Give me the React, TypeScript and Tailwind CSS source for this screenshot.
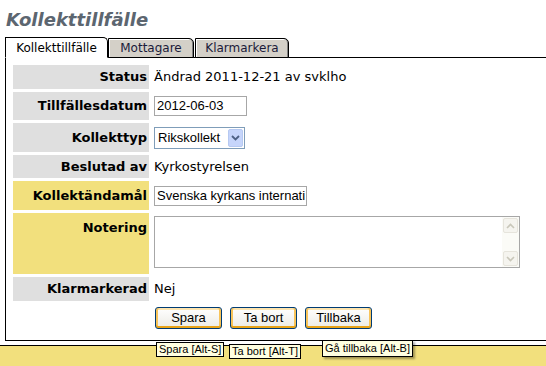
import React from "react";

const verdana = "font-['DejaVu_Sans',Verdana,sans-serif]";
const arial = "font-['Liberation_Sans',Arial,sans-serif]";

type Row = {
  label: string;
  h: string;
  tone: "gray" | "yellow";
  top?: boolean;
  value: React.ReactNode;
};

function TextBox({ value, w }: { value: string; w: string }) {
  return (
    <div
      className={`${w} h-[20px] whitespace-nowrap border border-[#a7a7a7] bg-white pl-[2px] text-[13px] leading-[18px] text-black ${arial}`}
    >
      {value}
    </div>
  );
}

function SelectBox() {
  return (
    <div className={`flex h-[22px] w-[91px] items-center border border-[#7f9db9] bg-white pl-[3px] pr-[1px] text-[13px] text-black ${arial}`}>
      <span className="flex-1">Rikskollekt</span>
      <span className="flex h-[18px] w-[15px] items-center justify-center rounded-[2px] border border-[#b6c9f2] bg-[#c6d5fb]">
        <svg width="9" height="6" viewBox="0 0 9 6">
          <path d="M1 1 L4.5 4.5 L8 1" fill="none" stroke="#4d6185" strokeWidth="1.8" />
        </svg>
      </span>
    </div>
  );
}

function NoteArea() {
  return (
    <div className="flex h-[52px] w-[366px] border border-[#a7a7a7] bg-white">
      <div className="flex-1" />
      <div className="flex w-[17px] flex-col justify-between bg-[#fbfbf7] p-[1px]">
        <div className="flex h-[15px] items-center justify-center rounded-[2px] border border-[#e6e4dc] bg-[#f5f4ef]">
          <svg width="9" height="6" viewBox="0 0 9 6">
            <path d="M1 5 L4.5 1.5 L8 5" fill="none" stroke="#c9c7ba" strokeWidth="1.6" />
          </svg>
        </div>
        <div className="flex h-[15px] items-center justify-center rounded-[2px] border border-[#e6e4dc] bg-[#f5f4ef]">
          <svg width="9" height="6" viewBox="0 0 9 6">
            <path d="M1 1 L4.5 4.5 L8 1" fill="none" stroke="#c9c7ba" strokeWidth="1.6" />
          </svg>
        </div>
      </div>
    </div>
  );
}

function XpButton({ label }: { label: string }) {
  return (
    <button
      className={`h-[22px] w-[67px] rounded-[3px] border border-[#003c74] bg-gradient-to-b from-white to-[#ecebe4] text-[13px] text-black shadow-[inset_0_-2px_0_#e8a317,inset_2px_0_0_#f8c45a,inset_-2px_0_0_#f8c45a,inset_0_2px_0_#fde5b0] ${arial}`}
    >
      {label}
    </button>
  );
}

const rows: Row[] = [
  { label: "Status", h: "h-[24px]", tone: "gray", value: <span>Ändrad 2011-12-21 av svklho</span> },
  { label: "Tillfällesdatum", h: "h-[28px]", tone: "gray", value: <TextBox value="2012-06-03" w="w-[93px]" /> },
  { label: "Kollekttyp", h: "h-[29px]", tone: "gray", value: <SelectBox /> },
  { label: "Beslutad av", h: "h-[23px]", tone: "gray", value: <span>Kyrkostyrelsen</span> },
  { label: "Kollektändamål", h: "h-[29px]", tone: "yellow", value: <TextBox value="Svenska kyrkans internati" w="w-[153px]" /> },
  { label: "Notering", h: "h-[61px]", tone: "yellow", top: true, value: <NoteArea /> },
  { label: "Klarmarkerad", h: "h-[24px]", tone: "gray", value: <span>Nej</span> },
];

function Tooltip({ text, className }: { text: string; className: string }) {
  return (
    <div
      className={`absolute whitespace-nowrap border border-black bg-[#ffffe1] px-[2px] text-[11px] leading-[13px] text-black ${arial} ${className}`}
    >
      {text}
    </div>
  );
}

export default function App() {
  return (
    <div className={`relative h-[366px] w-[546px] overflow-hidden bg-white ${verdana}`}>
      <div className="h-[37px] pl-[6px] pt-[8px]">
        <h1 className="text-[18px] font-bold italic leading-[24px] text-[#5c6670]">Kollekttillfälle</h1>
      </div>

      <div className="ml-[5px] w-[580px]">
        <div className="relative z-10 flex items-end text-[12px]">
          <div className="-mb-px flex h-[21px] w-[103px] items-center justify-center rounded-tr-[5px] border border-b-white border-black bg-white text-black">
            Kollekttillfälle
          </div>
          <div className="-mb-px flex h-[20px] w-[86px] items-center justify-center rounded-tr-[5px] border border-black bg-[#d4d0c8] text-[#1b1b3a] shadow-[inset_-1px_0_0_#808080,inset_1px_1px_0_#ffffff]">
            Mottagare
          </div>
          <div className="-mb-px ml-px flex h-[20px] w-[94px] items-center justify-center rounded-tr-[5px] border border-black bg-[#d4d0c8] text-[#1b1b3a] shadow-[inset_-1px_0_0_#808080,inset_1px_1px_0_#ffffff]">
            Klarmarkera
          </div>
        </div>

        <div className="border-b border-l border-t border-black pb-[11px] pl-[7px] pt-[7px]">
          <div className="flex flex-col gap-[3px] text-[13px] text-black">
            {rows.map((r) => (
              <div key={r.label} className={`flex ${r.h}`}>
                <div
                  className={`flex w-[136px] justify-end pr-[2px] font-bold ${r.top ? "items-start pt-[5px]" : "items-center"} ${
                    r.tone === "yellow" ? "bg-[#f2e07d]" : "bg-[#dfdfdf]"
                  }`}
                >
                  {r.label}
                </div>
                <div className={`ml-[5px] flex ${r.top ? "items-start pt-[3px]" : "items-center"}`}>{r.value}</div>
              </div>
            ))}
          </div>
          <div className="ml-[142px] mt-[6px] flex gap-[8px]">
            <XpButton label="Spara" />
            <XpButton label="Ta bort" />
            <XpButton label="Tillbaka" />
          </div>
        </div>
      </div>

      <div className="mt-[4px] h-[40px] border-t border-black bg-[#f2e07d]" />

      <Tooltip text="Spara [Alt-S]" className="left-[156px] top-[342px]" />
      <Tooltip text="Ta bort [Alt-T]" className="left-[229px] top-[344px]" />
      <Tooltip
        text="Gå tillbaka [Alt-B]"
        className="left-[322px] top-[340px] py-[1px] shadow-[2px_2px_2px_rgba(0,0,0,0.35)]"
      />
    </div>
  );
}
